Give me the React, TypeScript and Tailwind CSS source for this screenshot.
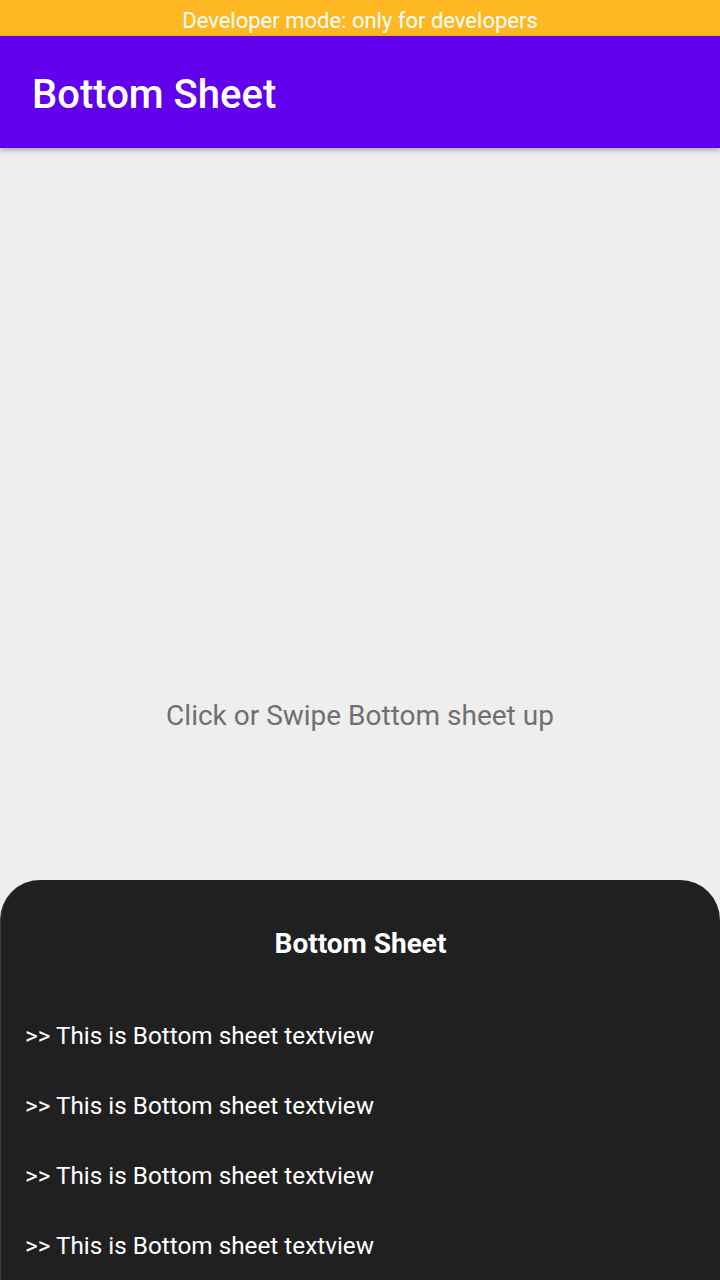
const lines = [1, 2, 3, 4];

export default function App() {
  return (
    <div
      className="relative flex h-[1280px] w-[720px] flex-col overflow-hidden bg-[#eeeeee]"
      style={{ fontFamily: "Roboto, 'Noto Sans', sans-serif" }}
    >
      <div className="flex h-[36px] items-center justify-center bg-[#ffb823] pt-[4px] text-[22px] text-white">
        Developer mode: only for developers
      </div>

      <header className="z-10 flex h-[112px] items-center bg-[#6200ee] px-[32px] pt-[5px] shadow-[0_2px_5px_rgba(0,0,0,0.3)]">
        <h1 className="text-[40px] font-medium text-white">Bottom Sheet</h1>
      </header>

      <main className="flex flex-1 items-center justify-center pt-[4px]">
        <p className="text-[28px] text-[#707070]">Click or Swipe Bottom sheet up</p>
      </main>

      {/* sheet peeks over the bottom of the page */}
      <section className="absolute bottom-0 left-0 h-[400px] w-full rounded-t-[40px] border-l border-[#3a3a3a] bg-[#202020]">
        <h2 className="mt-[46px] text-center text-[28px] leading-[36px] font-bold text-white">Bottom Sheet</h2>
        <div className="mt-[56px] flex flex-col">
          {lines.map((n) => (
            <p key={n} className="h-[70px] px-[24px] text-[24.3px] leading-[36px] text-white">
              &gt;&gt; This is Bottom sheet textview
            </p>
          ))}
        </div>
      </section>
    </div>
  );
}
